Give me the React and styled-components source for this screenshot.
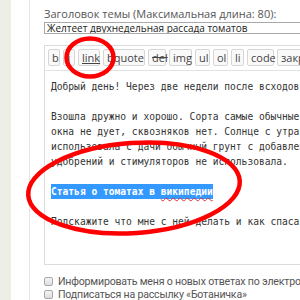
import React from "react";
import styled, { createGlobalStyle } from "styled-components";

const Global = createGlobalStyle`
  html, body { margin: 0; padding: 0; background: #fff; overflow: hidden; }
  #root { width: 300px; height: 300px; overflow: hidden; }
`;

const Page = styled.div`
  position: relative;
  display: flex;
  width: 300px;
  height: 300px;
  overflow: hidden;
  font-family: "Open Sans", "Noto Sans", sans-serif;
`;

const LeftStrip = styled.div`
  flex: 0 0 11px;
  background: #edefe6;
`;

const Gutter = styled.div`
  flex: 0 0 18px;
  border-right: 1px solid #e4e4e4;
`;

const Main = styled.div`
  flex: 0 0 auto;
  width: 420px;
  padding: 7px 0 0 14px;
  display: flex;
  flex-direction: column;
`;

const Label = styled.div`
  font-size: 11px;
  line-height: 14px;
  color: #555;
  white-space: nowrap;
  margin-bottom: 1px;
`;

const TitleInput = styled.input`
  box-sizing: border-box;
  width: 400px;
  height: 12px;
  margin: 0;
  padding: 0 2px;
  border: 1px solid #a9a9a9;
  font-family: "Open Sans", "Noto Sans", sans-serif;
  font-size: 10px;
  line-height: 10px;
  color: #222;
  outline: none;
`;

const Editor = styled.div`
  margin-top: 11px;
  border: 1px solid #dcdcdc;
  border-right: none;
`;

const Toolbar = styled.div`
  display: flex;
  gap: 3px;
  padding: 3px 3px 4px;
  border-bottom: 1px solid #e2e2e2;
  white-space: nowrap;
`;

const ToolButton = styled.span`
  box-sizing: border-box;
  flex: 0 0 auto;
  width: ${(p) => (p.$w ? `${p.$w}px` : "auto")};
  height: 17px;
  line-height: 15px;
  padding: 0 3px;
  text-align: center;
  border: 1px solid #d6d6d6;
  border-radius: 2px;
  background: #f9f9f9;
  color: #444;
  font-size: 11px;
  text-decoration: ${(p) => p.$deco || "none"};
`;

const TextArea = styled.div`
  height: 193px;
  box-sizing: border-box;
  padding: 8px 6px 0;
  font-family: "DejaVu Sans Mono", "Liberation Mono", monospace;
  font-size: 9.6px;
  line-height: 15px;
  color: #333;
  white-space: pre;
  overflow: hidden;
`;

const Line = styled.div`
  height: 15px;
`;

const Selected = styled.span`
  display: inline-block;
  height: 15px;
  line-height: 15px;
  background: #3399ff;
  color: #fff;
  font-weight: bold;
`;

const Misspelled = styled.span`
  text-decoration: underline wavy #e03030;
  text-decoration-thickness: 1px;
  text-underline-offset: 2px;
  text-decoration-skip-ink: none;
`;

const CheckRow = styled.label`
  display: flex;
  align-items: center;
  gap: 5px;
  height: 19px;
  margin-top: ${(p) => p.$top ?? 0}px;
  font-family: Roboto, "Open Sans", sans-serif;
  font-size: 10.6px;
  letter-spacing: -0.2px;
  color: #555;
  white-space: nowrap;
`;

const Box = styled.span`
  flex: 0 0 auto;
  width: 7px;
  height: 7px;
  border: 1px solid #a8a8a8;
  border-radius: 2px;
  background: linear-gradient(#f4f4f4, #dedede);
`;

const Overlay = styled.svg`
  position: absolute;
  left: 0;
  top: 0;
  width: 300px;
  height: 300px;
  pointer-events: none;
`;

const buttons = [
  { t: "b", w: 12 },
  { t: "i", w: 12 },
  { t: "link", w: 22, deco: "underline" },
  { t: "bquote", w: 42 },
  { t: "del", w: 18, deco: "line-through" },
  { t: "img", w: 23 },
  { t: "ul", w: 15 },
  { t: "ol", w: 15 },
  { t: "li", w: 13 },
  { t: "code", w: 27 },
  { t: "закрыть теги" },
];

const lines = [
  "Добрый день! Через две недели после всходов рассада начала желтеть.",
  "",
  "Взошла дружно и хорошо. Сорта самые обычные, стоят на подоконнике, из",
  "окна не дует, сквозняков нет. Солнце с утра до обеда. Землю",
  "использовала с дачи обычный грунт с добавлением песка и золы. Никаких",
  "удобрений и стимуляторов не использовала.",
  "",
  "SEL",
  "",
  "Подскажите что мне с ней делать и как спасать рассаду?",
];

export default function App() {
  return (
    <>
      <Global />
      <Page>
        <LeftStrip />
        <Gutter />
        <Main>
          <Label>Заголовок темы (Максимальная длина: 80):</Label>
          <TitleInput readOnly value="Желтеет двухнедельная рассада томатов" />
          <Editor>
            <Toolbar>
              {buttons.map((b) => (
                <ToolButton key={b.t} $deco={b.deco} $w={b.w}>
                  {b.t}
                </ToolButton>
              ))}
            </Toolbar>
            <TextArea>
              {lines.map((l, i) =>
                l === "SEL" ? (
                  <Line key={i}>
                    <Selected>
                      Статья о томатах в <Misspelled>википедии</Misspelled>
                    </Selected>
                  </Line>
                ) : (
                  <Line key={i}>{l}</Line>
                )
              )}
            </TextArea>
          </Editor>
          <CheckRow $top={10}>
            <Box />
            Информировать меня о новых ответах по электронной почте
          </CheckRow>
          <CheckRow>
            <Box />
            Подписаться на рассылку «Ботаничка»
          </CheckRow>
        </Main>
        <Overlay viewBox="0 0 300 300">
          <ellipse cx="90" cy="57.5" rx="23.5" ry="19" fill="none" stroke="#f00" strokeWidth="4.5" />
          <ellipse
            cx="134"
            cy="188"
            rx="106"
            ry="45"
            fill="none"
            stroke="#f00"
            strokeWidth="4.5"
            transform="rotate(-4 134 188)"
          />
        </Overlay>
      </Page>
    </>
  );
}
